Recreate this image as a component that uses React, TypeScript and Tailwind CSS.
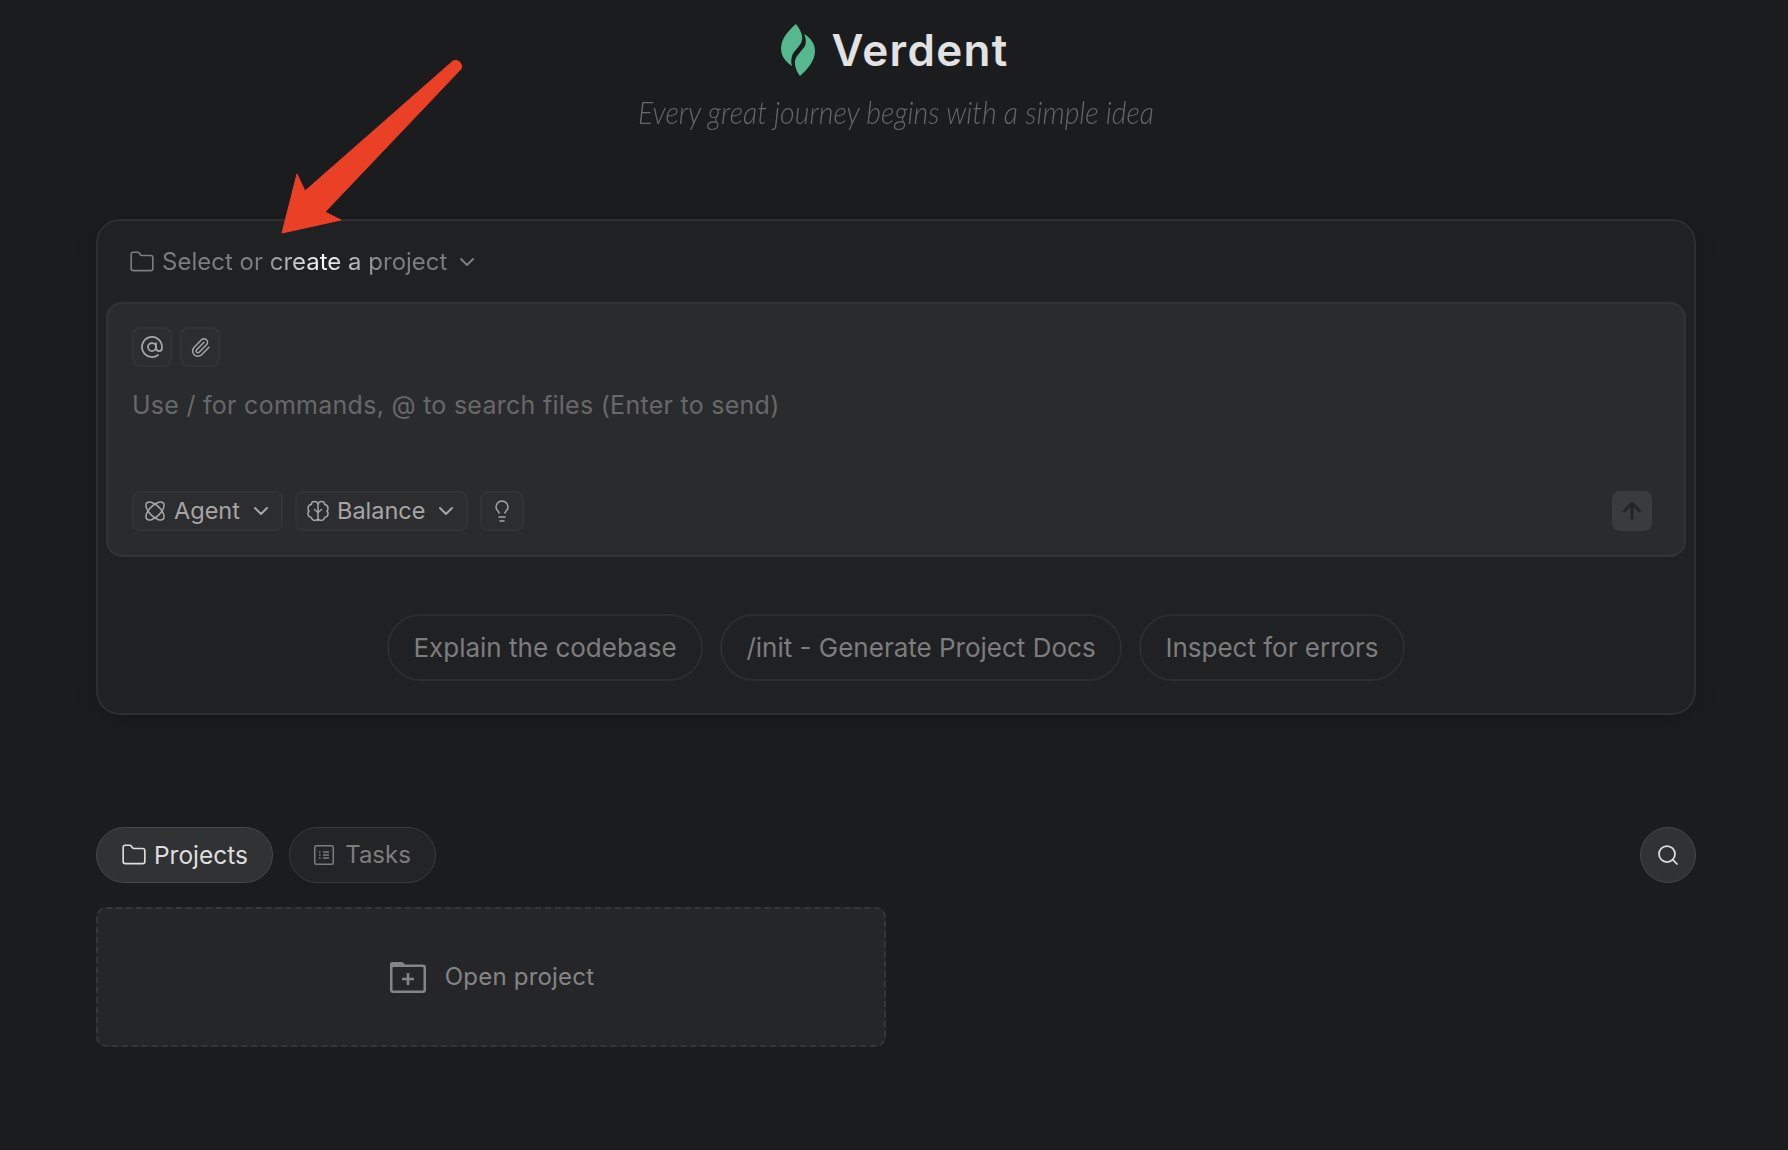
import { ArrowUp, AtSign, ChevronDown, Folder, Lightbulb, Paperclip, Search } from 'lucide-react'

const sans = "font-['Inter','Liberation_Sans',sans-serif]"

function LeafLogo() {
  return (
    <svg width="34" height="52" viewBox="0 0 34 52" className="shrink-0">
      <path d="M15 0C19 5 22 11 21 16 20 22 13 26 11 32 10 36 10 39 11 42 5 38 0 32 0 25 0 14 8 6 15 0Z" fill="#55b88f" />
      <path d="M19 52C26 46 34 37 34 27 34 20 30 14 23 10 25 14 25.500 18 24 22 21 27 15 31 14 37 13.500 43 16 48 19 52Z" fill="#55b88f" />
    </svg>
  )
}

function AtomIcon() {
  return (
    <svg width="22" height="22" viewBox="0 0 22 22" fill="none" stroke="currentColor" strokeWidth="1.500">
      <ellipse cx="11" cy="11" rx="11.500" ry="5.500" transform="rotate(45 11 11)" />
      <ellipse cx="11" cy="11" rx="11.500" ry="5.500" transform="rotate(-45 11 11)" />
    </svg>
  )
}

function BrainIcon() {
  return (
    <svg width="22" height="22" viewBox="0 0 22 22" fill="none" stroke="currentColor" strokeWidth="1.500" strokeLinecap="round" strokeLinejoin="round">
      <path d="M11 20.500V5.500C11 3 9.500 1.500 7.500 1.500S4.300 3 4.300 4.600C2.300 5 1 6.600 1 8.500c0 1 .4 2 1 2.600-.7.700-1 1.600-1 2.500 0 2 1.400 3.500 3.300 3.800.4 1.800 1.700 3 3.400 3 1.400 0 2.600-.5 3.300-1.400.7.900 1.900 1.400 3.300 1.400 1.700 0 3-1.200 3.400-3 1.900-.3 3.300-1.800 3.300-3.800 0-.9-.3-1.800-1-2.500.6-.6 1-1.600 1-2.600 0-1.900-1.300-3.500-3.300-3.900C17.700 3 16.500 1.500 14.500 1.500S11 3 11 5.500" />
      <path d="M11 12.500 7.500 9.500M11 12.500l3.500-3" />
    </svg>
  )
}

function TasksIcon() {
  return (
    <svg width="20" height="20" viewBox="0 0 20 20" fill="none" stroke="currentColor" strokeWidth="1.500">
      <rect x="0.750" y="0.750" width="18.500" height="18.500" rx="1.500" />
      <path d="M5 7h1.500M9 7h6M5 10h1.500M9 10h6M5 13h1.500M9 13h6" />
    </svg>
  )
}

function FolderPlusIcon() {
  return (
    <svg width="36" height="32" viewBox="0 0 36 32" fill="none" className="text-[#858585]">
      <path d="M0 3a2 2 0 0 1 2-2h9c1.500 0 2.500.600 3.500 2l1.500 2H2L0 7Z" fill="currentColor" />
      <rect x="1.250" y="4.750" width="33.500" height="26" rx="2" stroke="currentColor" strokeWidth="2.500" />
      <path d="M18 12v12M12 18h12" stroke="currentColor" strokeWidth="2.500" />
    </svg>
  )
}

function IconButton({ children, width }: { children: React.ReactNode; width: string }) {
  return (
    <div className={`flex h-10 ${width} items-center justify-center rounded-lg border-2 border-[#323335] bg-[#2c2d2f] text-[#a6a6a6]`}>
      {children}
    </div>
  )
}

function Chip({ label, width }: { label: string; width: string }) {
  return (
    <div className={`flex h-[67px] ${width} items-center justify-center rounded-full border-2 border-[#2c2d2f] text-[26px] text-[#7d7d7d]`}>
      {label}
    </div>
  )
}

export default function App() {
  return (
    <div className={`relative flex h-[1150px] w-[1788px] flex-col overflow-hidden bg-[#1b1c1e] pt-[24px] pr-[92px] pl-[96px] ${sans}`}>
      {/* header */}
      <div className="flex h-[52px] items-center justify-center gap-[16px] pr-[2px]">
        <LeafLogo />
        <span className="text-[44px] leading-none font-semibold tracking-[1.300px] text-[#e2e2e2]">Verdent</span>
      </div>
      <div className="mt-[16px] scale-x-[0.89] text-center font-['Lato',sans-serif] text-[32px] leading-[40px] font-light text-[#666666] italic">
        Every great journey begins with a simple idea
      </div>

      {/* composer */}
      <div className="mt-[87px] flex h-[496px] flex-col rounded-[24px] border-2 border-[#2d2e30] bg-[#202123] shadow-[0_4px_24px_rgba(0,0,0,0.15)]">
        <div className="flex h-[81px] items-center pl-[31px] text-[#7d7d7d]">
          <Folder size={26} strokeWidth={1.500} />
          <span className="ml-[7px] bg-[linear-gradient(90deg,#7d7d7d_35%,#ffffff_56%,#7d7d7d_78%)] bg-clip-text text-[24px] text-transparent">
            Select or create a project
          </span>
          <ChevronDown size={24} strokeWidth={2} className="ml-[8px]" />
        </div>
        <div className="mx-[8px] flex h-[255px] flex-col rounded-[16px] border-2 border-[#323335] bg-[#2a2b2d] pt-[23px] pr-[32px] pl-[24px]">
          <div className="flex gap-[8px]">
            <IconButton width="w-10"><AtSign size={24} strokeWidth={1.750} /></IconButton>
            <IconButton width="w-10"><Paperclip size={21} strokeWidth={1.750} /></IconButton>
          </div>
          <div className="mt-[18px] text-[25px] leading-[40px] tracking-[0.270px] text-[#67686a]">
            Use / for commands, @ to search files (Enter to send)
          </div>
          <div className="mt-[66px] flex items-center gap-[12px]">
            <div className="flex h-10 w-[151px] items-center rounded-lg border-2 border-[#323335] bg-[#2c2d2f] pl-[10px] text-[#a6a6a6]">
              <AtomIcon />
              <span className="ml-[8px] text-[23.500px]">Agent</span>
              <ChevronDown size={24} strokeWidth={2} className="ml-[9px]" />
            </div>
            <div className="flex h-10 w-[173px] items-center rounded-lg border-2 border-[#323335] bg-[#2c2d2f] pl-[10px] text-[#a6a6a6]">
              <BrainIcon />
              <span className="ml-[8px] text-[23.500px]">Balance</span>
              <ChevronDown size={24} strokeWidth={2} className="ml-[9px]" />
            </div>
            <IconButton width="w-[44px]"><Lightbulb size={24} strokeWidth={1.500} /></IconButton>
            <div className="ml-auto flex h-10 w-10 items-center justify-center rounded-lg bg-[#3a3b3d] text-[#222325]">
              <ArrowUp size={26} strokeWidth={2.500} />
            </div>
          </div>
        </div>
        <div className="flex flex-1 items-start justify-center gap-[17px] pt-[57px]">
          <Chip label="Explain the codebase" width="w-[316px]" />
          <Chip label="/init - Generate Project Docs" width="w-[402px]" />
          <Chip label="Inspect for errors" width="w-[266px]" />
        </div>
      </div>

      {/* tabs */}
      <div className="mt-[112px] flex items-center gap-[16px]">
        <div className="flex h-[56px] w-[177px] items-center justify-center gap-[7px] rounded-full border border-[#464749] bg-[#313234] text-[24.500px] text-[#dedede]">
          <Folder size={26} strokeWidth={1.500} />
          Projects
        </div>
        <div className="flex h-[56px] w-[147px] items-center justify-center gap-[11px] rounded-full border border-[#3a3b3d] bg-[#232426] text-[24px] text-[#7d7d7d]">
          <TasksIcon />
          Tasks
        </div>
        <div className="ml-auto flex h-[56px] w-[56px] items-center justify-center rounded-full border border-[#464749] bg-[#313234] text-[#dedede]">
          <Search size={24} strokeWidth={1.750} />
        </div>
      </div>

      {/* open project */}
      <div className="mt-[24px] flex h-[140px] w-[790px] items-center justify-center gap-[19px] rounded-[10px] border-2 border-dashed border-[#353638] bg-[#252628] pl-[2px]">
        <FolderPlusIcon />
        <span className="text-[24px] tracking-[0.200px] text-[#858585]">Open project</span>
      </div>

      {/* annotation arrow */}
      <svg className="absolute top-0 left-0" width="1788" height="300" fill="none">
        <path
          d="M453 61A6 6 0 0 1 461 69L325 212l16 8-59 13 15-59 8 17Z"
          fill="#ea4025"
          stroke="#ea4025"
          strokeWidth="1"
          strokeLinejoin="round"
        />
      </svg>
    </div>
  )
}
